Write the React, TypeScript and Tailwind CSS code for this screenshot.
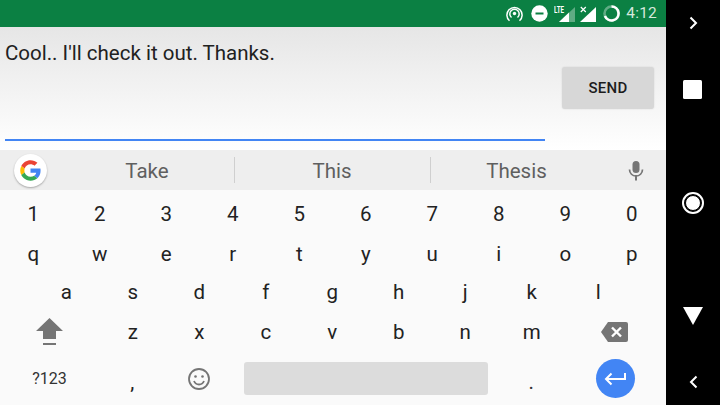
import React from "react";

const Key = ({ c, className = "" }: { c: string; className?: string }) => (
  <div className={`flex items-center justify-center ${className}`}>{c}</div>
);

const Row = ({ keys, className = "" }: { keys: string; className?: string }) => (
  <div className={`flex ${className}`}>
    {keys.split("").map((k) => (
      <Key key={k} c={k} className="w-[66.5px]" />
    ))}
  </div>
);

const GoogleG = () => (
  <svg width="21" height="21" viewBox="0 0 48 48">
    <path fill="#EA4335" d="M24 9.500c3.500 0 6.700 1.300 9.200 3.400l6.600-6.600C35.700 2.700 30.200 0.500 24 0.500 14.800 0.500 6.900 5.800 3 13.500l7.700 6C12.600 13.700 17.800 9.500 24 9.500z" />
    <path fill="#4285F4" d="M47 24.500c0-1.600-.2-3.300-.5-5H24v9.500h13c-.6 3-2.300 5.400-4.800 7l7.400 5.800C44.300 37.400 47 31.500 47 24.500z" />
    <path fill="#FBBC05" d="M10.700 28.500c-.5-1.400-.7-2.900-.7-4.500s.3-3.100.7-4.500l-7.700-6C1.400 16.700.5 20.200.5 24s.9 7.300 2.500 10.500l7.700-6z" />
    <path fill="#34A853" d="M24 47.500c6.200 0 11.600-2 15.600-5.700l-7.400-5.800c-2.100 1.400-4.800 2.300-8.200 2.300-6.200 0-11.400-4.200-13.300-9.800l-7.700 6C6.900 42.200 14.800 47.500 24 47.500z" />
  </svg>
);

const StatusBar = () => (
  <div className="h-[27px] bg-[#0b8043] flex items-center justify-end text-white">
    <svg width="17" height="16" viewBox="0 0 17 16" fill="none" stroke="white" className="mr-[8px]">
      <circle cx="8.500" cy="7.500" r="1.700" fill="white" stroke="none" />
      <path d="M5.500 11.500a4.700 4.700 0 1 1 6 0" strokeWidth="1.500" />
      <path d="M3.500 14.800a7.600 7.600 0 1 1 10 0" strokeWidth="1.500" />
    </svg>
    <svg width="17" height="17" viewBox="0 0 17 17" className="mr-[6px]">
      <circle cx="8.500" cy="8.500" r="8.200" fill="white" />
      <rect x="4.500" y="7.500" width="8" height="2" fill="#0b8043" />
    </svg>
    <svg width="21" height="18" viewBox="0 0 21 18" className="mr-[5px]">
      <path d="M5 17L21 2v15z" fill="white" fillOpacity="0.35" />
      <path d="M5 17L15 7.600V17z" fill="white" />
      <text x="0" y="8" fontSize="9" fontWeight="700" fill="white" fontFamily="Roboto, sans-serif" textLength="10" lengthAdjust="spacingAndGlyphs">LTE</text>
    </svg>
    <svg width="16" height="16" viewBox="0 0 16 16" className="mr-[7px]">
      <path d="M0 16L16 1v15z" fill="white" />
      <path d="M0.800 1l5 5M5.800 1l-5 5" stroke="white" strokeWidth="1.200" />
    </svg>
    <svg width="17" height="17" viewBox="0 0 17 17" fill="none" className="mr-[6px]">
      <circle cx="8.500" cy="8.500" r="7" stroke="white" strokeOpacity="0.35" strokeWidth="2.600" />
      <path d="M8.500 1.500a7 7 0 1 1-6.500 9.500" stroke="white" strokeWidth="2.600" />
    </svg>
    <span className="text-[15.500px] text-[#d5e8dc] mr-[9px] tracking-[0.2px]">4:12</span>
  </div>
);

const Nav = () => (
  <div className="w-[54px] h-[405px] bg-black flex flex-col items-center">
    <svg width="9" height="14" viewBox="0 0 9 14" fill="none" stroke="white" strokeWidth="2" className="mt-[16px]">
      <path d="M1.500 1.500L7 7l-5.500 5.500" />
    </svg>
    <div className="w-[19px] h-[19px] bg-white rounded-[1.500px] mt-[50px] mr-[1px]" />
    <div className="w-[22px] h-[22px] rounded-full border-2 border-white mt-[93px] mr-[1px] flex items-center justify-center">
      <div className="w-[16px] h-[16px] rounded-full border border-black bg-white" />
    </div>
    <svg width="20" height="18" viewBox="0 0 20 18" className="mt-[93px]">
      <path d="M0 0h20L10 18z" fill="white" />
    </svg>
    <svg width="9" height="14" viewBox="0 0 9 14" fill="none" stroke="white" strokeWidth="2" className="mt-[50px]">
      <path d="M7.500 1.500L2 7l5.500 5.500" />
    </svg>
  </div>
);

export default function App() {
  return (
    <div className="w-[720px] h-[405px] flex overflow-hidden bg-black font-['Roboto',sans-serif]">
      <div className="w-[666px] flex flex-col">
        <StatusBar />
        <div className="h-[123px] flex bg-gradient-to-b from-[#e6e6e6] to-white">
          <div className="w-[540px] h-[114px] ml-[5px] border-b-2 border-[#4285f4] pt-[13px] text-[20.500px] leading-[26px] text-[#212121]">
            Cool.. I'll check it out. Thanks.
          </div>
          <div className="w-[92px] h-[42px] ml-[17px] mt-[40px] pt-[1px] bg-[#d7d7d7] rounded-[3px] shadow-[0_0_2px_rgba(0,0,0,0.12)] flex items-center justify-center text-[15px] font-medium tracking-[0.3px] text-[#1c1c1c]">
            SEND
          </div>
        </div>
        <div className="h-[40px] bg-[#eeeeee] flex items-center relative text-[20.500px] text-[#5f5f5f]">
          <div className="ml-[14px] w-[33px] h-[33px] rounded-full bg-white shadow-[0_1px_2px_rgba(0,0,0,0.3)] flex items-center justify-center">
            <GoogleG />
          </div>
          <div className="ml-[13px] w-[174px] text-center pt-[2px]">Take</div>
          <div className="w-px h-[26px] bg-[#cfcfcf]" />
          <div className="w-[195px] text-center pt-[2px] pr-[1px]">This</div>
          <div className="w-px h-[26px] bg-[#cfcfcf]" />
          <div className="w-[172px] text-center pt-[2px] pr-[1px]">Thesis</div>
          <svg width="18" height="22" viewBox="0 0 18 22" className="ml-[24px] mt-[1px]">
            <rect x="5.500" y="1" width="7" height="12" rx="3.500" fill="#757575" />
            <path d="M2.500 9.500c0 4 3 6.500 6.500 6.500s6.500-2.500 6.500-6.500" fill="none" stroke="#757575" strokeWidth="1.700" />
            <rect x="8" y="15" width="2" height="5.500" fill="#757575" />
          </svg>
        </div>
        <div className="flex-1 bg-[#fafafa] flex flex-col text-[20.500px] text-[#222222]">
          <Row keys="1234567890" className="h-[43px] pt-[5px]" />
          <Row keys="qwertyuiop" className="h-[40px] pt-[2px]" />
          <Row keys="asdfghjkl" className="h-[39px] pl-[33px]" />
          <div className="flex h-[40px] items-center">
            <div className="w-[99px] flex justify-center">
              <svg width="27" height="29" viewBox="0 0 27 29" fill="#757575" className="mb-[1px]">
                <path d="M13.500 1L27 14h-7v8H7v-8H0z" />
                <rect x="7" y="26" width="13" height="2" />
              </svg>
            </div>
            <Row keys="zxcvbnm" className="pl-[0.5px]" />
            <div className="w-[100px] flex justify-center">
              <svg width="27" height="20" viewBox="0 0 27 20" className="mr-[1px]">
                <path d="M7 0h18a2 2 0 0 1 2 2v16a2 2 0 0 1-2 2H7L0 10z" fill="#757575" />
                <path d="M11 5.500l9 9M20 5.500l-9 9" stroke="white" strokeWidth="2.400" />
              </svg>
            </div>
          </div>
          <div className="flex flex-1 items-center">
            <div className="w-[99px] text-center text-[16px] text-[#333333]">?123</div>
            <div className="w-[66.5px] text-center pt-[7px]">,</div>
            <div className="w-[66.5px] flex justify-center">
              <svg width="24" height="24" viewBox="0 0 24 24" fill="none" stroke="#757575" strokeWidth="1.800">
                <circle cx="12" cy="12" r="10" />
                <circle cx="8.500" cy="9.500" r="1.300" fill="#757575" stroke="none" />
                <circle cx="15.500" cy="9.500" r="1.300" fill="#757575" stroke="none" />
                <path d="M7 14c1 2.500 3 3.500 5 3.500s4-1 5-3.500" />
              </svg>
            </div>
            <div className="w-[266px] pl-[12px] pr-[10px]">
              <div className="h-[33px] bg-[#dcdcdc] rounded-[3px]" />
            </div>
            <div className="w-[66.5px] text-center text-[#333333] pt-[8px]">.</div>
            <div className="flex-1 flex justify-center">
              <div className="w-[39px] h-[39px] rounded-full bg-[#4285f4] flex items-center justify-center">
                <svg width="22" height="15" viewBox="0 0 22 15" fill="none" stroke="white" strokeWidth="2">
                  <path d="M21 2v6H2.500M7.500 2.500L2 8l5.500 5.500" />
                </svg>
              </div>
            </div>
          </div>
        </div>
      </div>
      <Nav />
    </div>
  );
}
